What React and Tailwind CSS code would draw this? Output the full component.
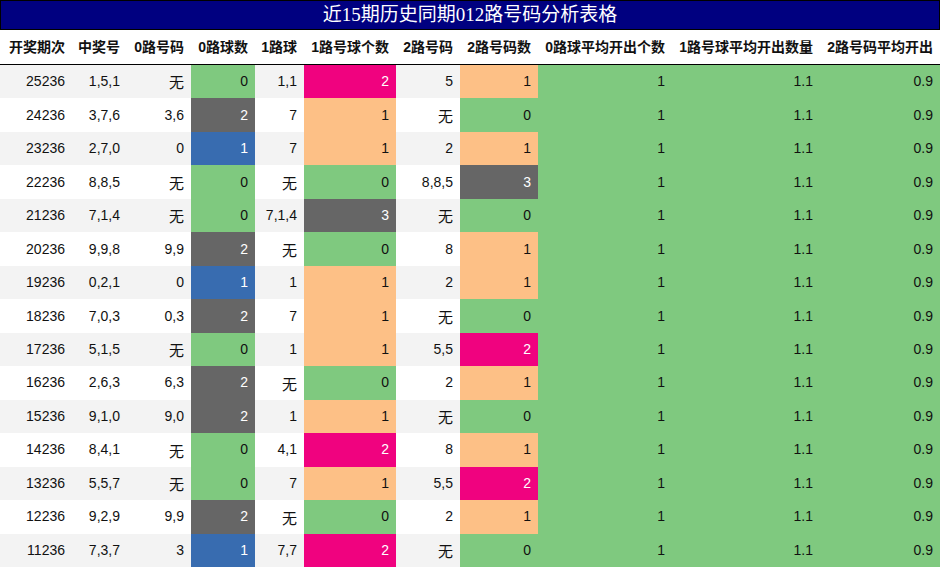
import React from 'react';

const G = 'bg-[#7fc97f] text-[#111]';
const O = 'bg-[#fdc086] text-[#111]';
const K = 'bg-[#666666] text-white';
const B = 'bg-[#386cb0] text-white';
const P = 'bg-[#f0027f] text-white';

const widths = ['w-[72px]', 'w-[55px]', 'w-[64px]', 'w-[64px]', 'w-[49px]', 'w-[92px]', 'w-[64px]', 'w-[78px]', 'w-[134px]', 'w-[148px]', 'w-[120px]'];

const headers = ['开奖期次', '中奖号', '0路号码', '0路球数', '1路球', '1路号球个数', '2路号码', '2路号码数', '0路球平均开出个数', '1路号球平均开出数量', '2路号码平均开出'];

const rows = [
  ['25236', '1,5,1', '无', ['0', G], '1,1', ['2', P], '5', ['1', O]],
  ['24236', '3,7,6', '3,6', ['2', K], '7', ['1', O], '无', ['0', G]],
  ['23236', '2,7,0', '0', ['1', B], '7', ['1', O], '2', ['1', O]],
  ['22236', '8,8,5', '无', ['0', G], '无', ['0', G], '8,8,5', ['3', K]],
  ['21236', '7,1,4', '无', ['0', G], '7,1,4', ['3', K], '无', ['0', G]],
  ['20236', '9,9,8', '9,9', ['2', K], '无', ['0', G], '8', ['1', O]],
  ['19236', '0,2,1', '0', ['1', B], '1', ['1', O], '2', ['1', O]],
  ['18236', '7,0,3', '0,3', ['2', K], '7', ['1', O], '无', ['0', G]],
  ['17236', '5,1,5', '无', ['0', G], '1', ['1', O], '5,5', ['2', P]],
  ['16236', '2,6,3', '6,3', ['2', K], '无', ['0', G], '2', ['1', O]],
  ['15236', '9,1,0', '9,0', ['2', K], '1', ['1', O], '无', ['0', G]],
  ['14236', '8,4,1', '无', ['0', G], '4,1', ['2', P], '8', ['1', O]],
  ['13236', '5,5,7', '无', ['0', G], '7', ['1', O], '5,5', ['2', P]],
  ['12236', '9,2,9', '9,9', ['2', K], '无', ['0', G], '2', ['1', O]],
  ['11236', '7,3,7', '3', ['1', B], '7,7', ['2', P], '无', ['0', G]],
];

const Cell = ({ w, cls, children }) => (
  <div className={`${w} ${cls} h-full flex items-center justify-end pr-[7px] whitespace-nowrap`}>{children}</div>
);

export default function App() {
  return (
    <div className="w-[940px] h-[568px] bg-white overflow-hidden text-[14px] text-[#111]" style={{ fontFamily: '"Liberation Sans", "Noto Sans CJK SC", sans-serif' }}>
      <div
        className="h-[30px] bg-[#000080] border border-black text-white text-[19px] flex items-center justify-center"
        style={{ fontFamily: '"Liberation Serif", "Noto Sans CJK SC", serif' }}
      >
        近15期历史同期012路号码分析表格
      </div>
      <div className="flex h-[35px] border-b border-black font-bold">
        {headers.map((h, i) => (
          <Cell key={i} w={widths[i]} cls="">{h}</Cell>
        ))}
      </div>
      {rows.map((r, ri) => {
        const bg = ri % 2 === 0 ? 'bg-[#f3f3f3]' : 'bg-white';
        const cells = [...r, ['1', G], ['1.1', G], ['0.9', G]];
        return (
          <div key={ri} className={`flex h-[33.47px] ${bg}`}>
            {cells.map((c, ci) =>
              Array.isArray(c) ? (
                <Cell key={ci} w={widths[ci]} cls={c[1]}>{c[0]}</Cell>
              ) : (
                <Cell key={ci} w={widths[ci]} cls="">{c === '无' ? <span className="text-[15px] translate-y-[2px]">{c}</span> : c}</Cell>
              )
            )}
          </div>
        );
      })}
    </div>
  );
}
